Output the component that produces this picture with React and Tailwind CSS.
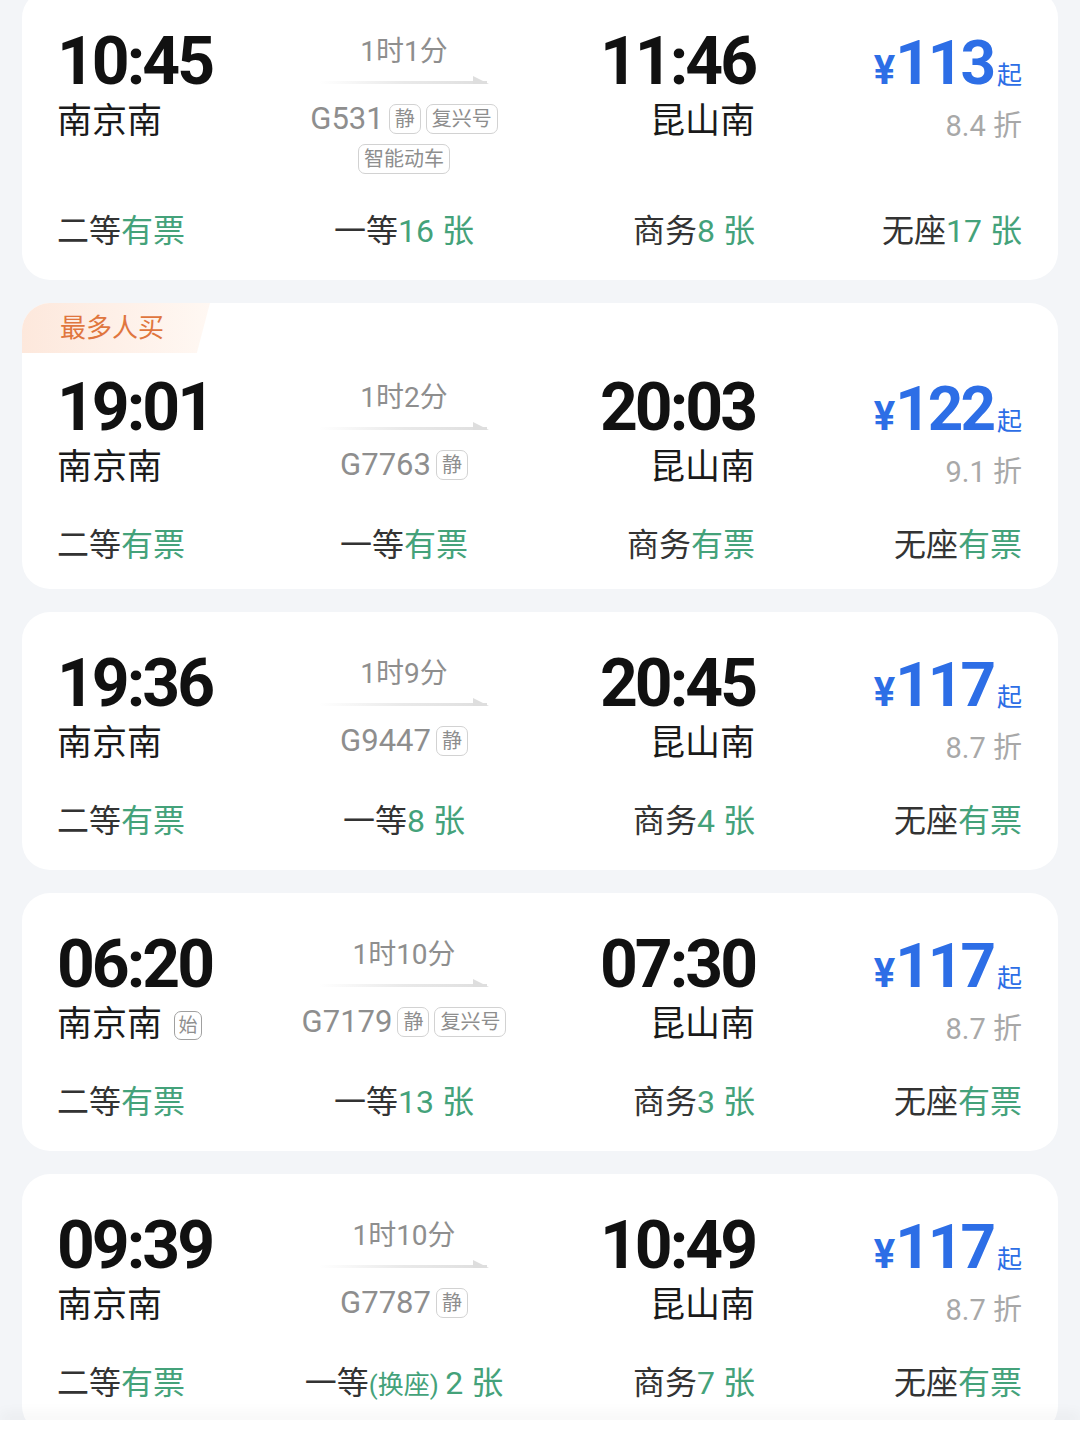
import React from "react";

const trains = [
  {
    dep: "10:45", from: "南京南", dur: "1时1分", no: "G531", tags: ["静", "复兴号"], tags2: ["智能动车"],
    arr: "11:46", to: "昆山南", price: "113", disc: "8.4",
    seats: [["二等", "有票"], ["一等", "16 张"], ["商务", "8 张"], ["无座", "17 张"]],
  },
  {
    dep: "19:01", from: "南京南", dur: "1时2分", no: "G7763", tags: ["静"], badge: "最多人买",
    arr: "20:03", to: "昆山南", price: "122", disc: "9.1",
    seats: [["二等", "有票"], ["一等", "有票"], ["商务", "有票"], ["无座", "有票"]],
  },
  {
    dep: "19:36", from: "南京南", dur: "1时9分", no: "G9447", tags: ["静"],
    arr: "20:45", to: "昆山南", price: "117", disc: "8.7",
    seats: [["二等", "有票"], ["一等", "8 张"], ["商务", "4 张"], ["无座", "有票"]],
  },
  {
    dep: "06:20", from: "南京南", start: true, dur: "1时10分", no: "G7179", tags: ["静", "复兴号"],
    arr: "07:30", to: "昆山南", price: "117", disc: "8.7",
    seats: [["二等", "有票"], ["一等", "13 张"], ["商务", "3 张"], ["无座", "有票"]],
  },
  {
    dep: "09:39", from: "南京南", dur: "1时10分", no: "G7787", tags: ["静"],
    arr: "10:49", to: "昆山南", price: "117", disc: "8.7",
    seats: [["二等", "有票"], ["一等", "2 张", "(换座)"], ["商务", "7 张"], ["无座", "有票"]],
  },
];

function Tag({ text }) {
  return (
    <span className="inline-flex h-[30px] items-center rounded-[7px] border-[1.5px] border-[#d2d2d2] px-[5px] text-[20px] leading-none text-[#8e8e8e]">
      {text}
    </span>
  );
}

function Arrow() {
  return (
    <svg width="170" height="12" viewBox="0 0 170 12" className="mt-[2px]">
      <defs>
        <linearGradient id="line" x1="0" x2="1" y1="0" y2="0">
          <stop offset="0" stopColor="#e4e4e4" stopOpacity="0" />
          <stop offset="0.5" stopColor="#e4e4e4" stopOpacity="0.8" />
          <stop offset="1" stopColor="#dedede" />
        </linearGradient>
      </defs>
      <rect x="0" y="9" width="168" height="3" fill="url(#line)" />
      <path d="M154 4 L170 12 L154 12 Z" fill="#dedede" />
    </svg>
  );
}

function Seat({ seat, align }) {
  const [label, value, note] = seat;
  return (
    <div className={align}>
      <span className="text-[#333]">{label}</span>
      {note && <span className="text-[26px] text-[#44a27a]">{note} </span>}
      <span className="text-[#44a27a]">{value}</span>
    </div>
  );
}

function Card({ t }) {
  return (
    <div
      className={
        "relative overflow-hidden rounded-[28px] bg-white pl-[35px] pr-[36px] " +
        (t.badge ? "pt-[69px] pb-[24px]" : "pt-[36px] pb-[29px]")
      }
    >
      {t.badge && (
        <div className="absolute left-0 top-0 h-[50px] w-[188px] bg-linear-to-r from-[#fde8dc] via-[#fef0e8] to-[#fff8f3] pl-[38px] text-[26px] leading-[50px] text-[#e0763e] [clip-path:polygon(0_0,100%_0,93%_100%,0_100%)]">
          {t.badge}
        </div>
      )}
      <div className="grid grid-cols-[233px_228px_237px_267px] items-start">
        <div className="flex flex-col items-start">
          <div className="mt-[3px] h-[66px] text-[66px] font-bold leading-[66px] tracking-[-3px] text-[#111]">{t.dep}</div>
          <div className="mt-[7px] flex items-center gap-[12px] text-[35px] leading-[40px] text-[#1a1a1a]">
            {t.from}
            {t.start && (
              <span className="inline-flex h-[29px] w-[28px] items-center justify-center rounded-[7px] border-[1.5px] border-[#a0a0a0] text-[19px] leading-none text-[#8e8e8e]">
                始
              </span>
            )}
          </div>
        </div>

        <div className="flex flex-col items-center">
          <div className="mt-[8px] text-[28px] leading-[36px] text-[#8e8e8e]">{t.dur}</div>
          <Arrow />
          <div className="mt-[17px] flex h-[36px] items-center gap-[5px]">
            <span className="text-[31px] leading-[36px] text-[#8e8e8e]">{t.no}</span>
            {t.tags.map((x) => (
              <Tag key={x} text={x} />
            ))}
          </div>
          {t.tags2 && (
            <div className="mt-[7px] flex gap-[5px]">
              {t.tags2.map((x) => (
                <Tag key={x} text={x} />
              ))}
            </div>
          )}
        </div>

        <div className="flex flex-col items-end">
          <div className="mt-[3px] h-[66px] text-[66px] font-bold leading-[66px] tracking-[-3px] text-[#111]">{t.arr}</div>
          <div className="mt-[7px] text-[35px] leading-[40px] text-[#1a1a1a]">{t.to}</div>
        </div>

        <div className="flex flex-col items-end">
          <div className="mt-[5px] h-[64px] whitespace-nowrap leading-[64px] text-[#2d6ee6]">
            <span className="text-[40px] font-bold">¥</span>
            <span className="text-[62px] font-bold tracking-[-3px]">{t.price}</span>
            <span className="ml-[4px] text-[25px]">起</span>
          </div>
          <div className="mt-[15px] text-[29px] leading-[32px] text-[#a8a8a8]">{t.disc} 折</div>
        </div>
      </div>

      <div className="mt-[37px] grid grid-cols-[233px_228px_237px_267px] text-[32px] leading-[40px]">
        <Seat seat={t.seats[0]} align="text-left" />
        <Seat seat={t.seats[1]} align="text-center" />
        <Seat seat={t.seats[2]} align="text-right" />
        <Seat seat={t.seats[3]} align="text-right" />
      </div>
    </div>
  );
}

export default function App() {
  return (
    <div className="relative h-[1429px] overflow-hidden bg-[#f3f5f8] font-[Roboto,'Noto_Sans_CJK_SC',sans-serif]">
      <div className="-mt-[10px] flex flex-col gap-[23px] px-[22px]">
        {trains.map((t) => (
          <Card key={t.no} t={t} />
        ))}
      </div>
      <div className="absolute inset-x-0 bottom-0 h-[9px] bg-white shadow-[0_-6px_14px_rgba(0,0,0,0.05)]" />
    </div>
  );
}
